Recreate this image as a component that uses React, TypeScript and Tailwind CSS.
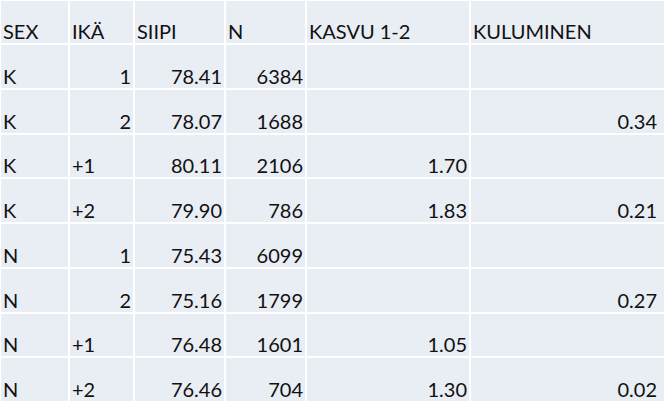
type Row = {
  sex: string;
  age: string;
  wing: string;
  n: string;
  growth: string;
  wear: string;
};

const rows: Row[] = [
  { sex: "K", age: "1", wing: "78.41", n: "6384", growth: "", wear: "" },
  { sex: "K", age: "2", wing: "78.07", n: "1688", growth: "", wear: "0.34" },
  { sex: "K", age: "+1", wing: "80.11", n: "2106", growth: "1.70", wear: "" },
  { sex: "K", age: "+2", wing: "79.90", n: "786", growth: "1.83", wear: "0.21" },
  { sex: "N", age: "1", wing: "75.43", n: "6099", growth: "", wear: "" },
  { sex: "N", age: "2", wing: "75.16", n: "1799", growth: "", wear: "0.27" },
  { sex: "N", age: "+1", wing: "76.48", n: "1601", growth: "1.05", wear: "" },
  { sex: "N", age: "+2", wing: "76.46", n: "704", growth: "1.30", wear: "0.02" },
];

const headers = ["SEX", "IKÄ", "SIIPI", "N", "KASVU 1-2", "KULUMINEN"];

function Cell({ children, right = false, last = false }: { children?: string; right?: boolean; last?: boolean }) {
  return (
    <div
      className={`flex items-end bg-[#e9edf4] pl-[2px] ${right ? "justify-end" : "justify-start"} ${
        last ? "pr-[7px]" : "pr-[2px]"
      }`}
    >
      <span className="leading-[24px] whitespace-nowrap">{children}</span>
    </div>
  );
}

export default function App() {
  return (
    <div className="w-[664px] h-[416px] bg-white overflow-hidden text-[20px] text-[#111111] font-['Lato',sans-serif]">
      <div className="grid grid-cols-[67px_63px_89px_79px_162px_193px] grid-rows-[42px_repeat(8,42.75px)] gap-[2px] pt-[1px] pl-[1px]">
        {headers.map((h) => (
          <Cell key={h}>{h}</Cell>
        ))}
        {rows.map((r, i) => (
          <div key={i} className="contents">
            <Cell>{r.sex}</Cell>
            <Cell right={!r.age.startsWith("+")}>{r.age}</Cell>
            <Cell right>{r.wing}</Cell>
            <Cell right>{r.n}</Cell>
            <Cell right>{r.growth}</Cell>
            <Cell right last>
              {r.wear}
            </Cell>
          </div>
        ))}
      </div>
    </div>
  );
}
